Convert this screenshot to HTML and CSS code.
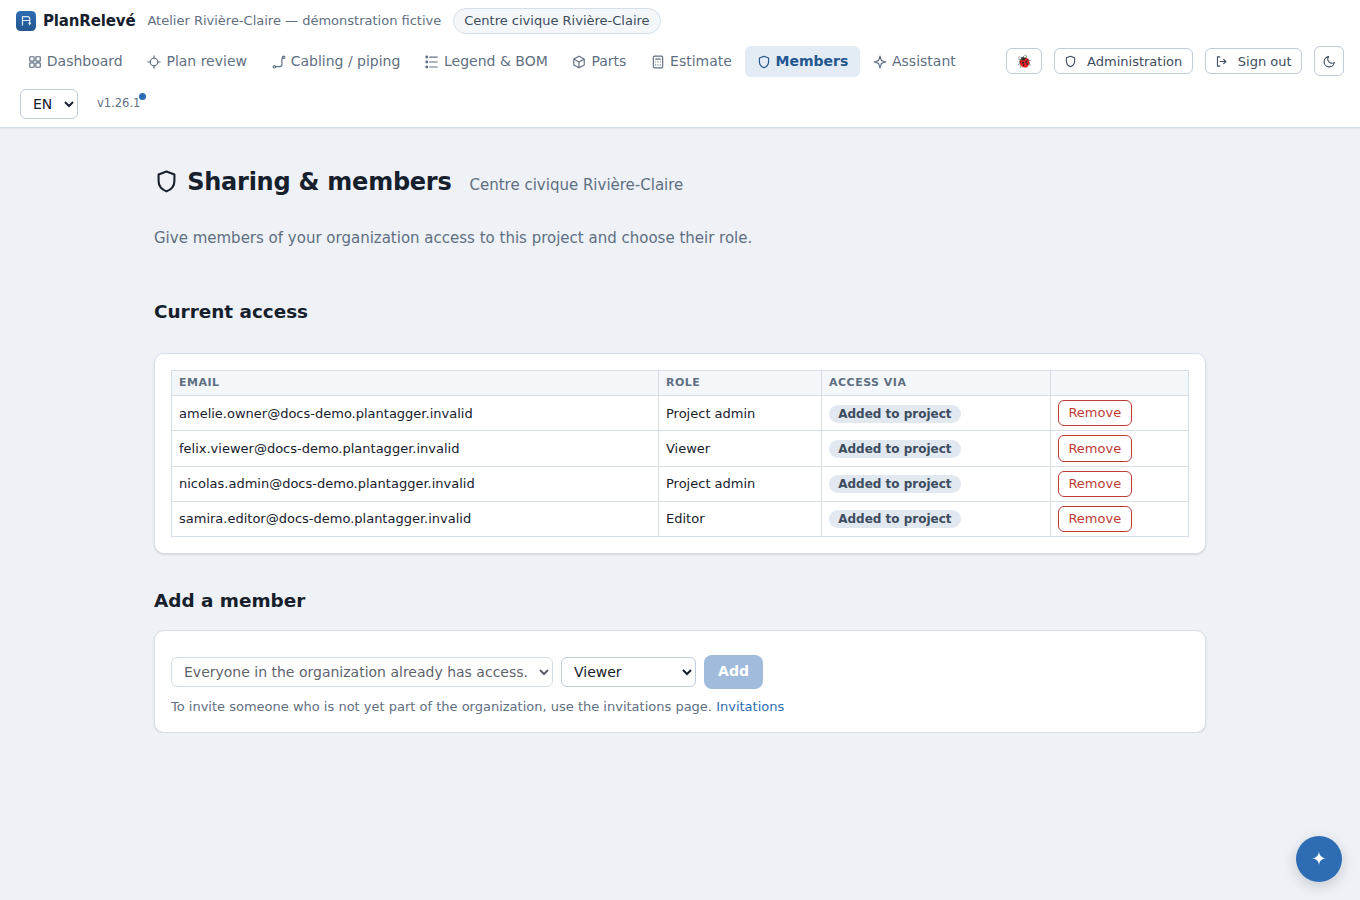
FILE: index.html
```html
<!DOCTYPE html>
<html lang="en">
<head>
  <meta charset="UTF-8">
  <meta name="viewport" content="width=device-width, initial-scale=1.0">
  <title>Sharing &amp; members - PlanRelevé</title>
  <link rel="stylesheet" href="styles.css">
</head>
<body>
  <header class="topbar">
    <div class="topbar-row brand-row">
      <div class="brand">
        <svg class="logo" viewBox="0 0 20 20">
          <defs>
            <linearGradient id="logoFill" x1="0" y1="0" x2="0" y2="1">
              <stop offset="0" stop-color="#2e6db4"/>
              <stop offset="1" stop-color="#23568f"/>
            </linearGradient>
          </defs>
          <rect width="20" height="20" rx="4.5" fill="url(#logoFill)"/>
          <path d="M6.500 14.500V5.600H11.500a2.200 2.200 0 0 1 2.200 2.200V12.500M6.500 9.500H13.700" fill="none" stroke="#dce8f5" stroke-width="1.200"/>
          <path d="M12.200 11.800h3L13.700 14.600z" fill="#fff"/>
        </svg>
        <span>PlanRelevé</span>
      </div>
      <span class="org">Atelier Rivière-Claire — démonstration fictive</span>
      <span class="project-chip">Centre civique Rivière-Claire</span>
    </div>

    <div class="topbar-row">
      <nav class="nav">
        <a href="#"><svg class="icon" viewBox="0 0 24 24"><rect x="3" y="3" width="7.500" height="7.500" rx="1"/><rect x="13.500" y="3" width="7.500" height="7.500" rx="1"/><rect x="3" y="13.500" width="7.500" height="7.500" rx="1"/><rect x="13.500" y="13.500" width="7.500" height="7.500" rx="1"/></svg>Dashboard</a>
        <a href="#"><svg class="icon" viewBox="0 0 24 24"><circle cx="12" cy="12" r="6.500"/><path d="M12 1.500v4M12 18.500v4M1.500 12h4M18.500 12h4"/></svg>Plan review</a>
        <a href="#"><svg class="icon" viewBox="0 0 24 24"><circle cx="4" cy="20" r="2"/><circle cx="20" cy="4" r="2"/><path d="M6 20h7a4 4 0 0 0 4-4V8q0-4 2-4"/></svg>Cabling / piping</a>
        <a href="#"><svg class="icon" viewBox="0 0 24 24"><path d="M8 3.500h13M8 12h13M8 20.500h13"/><g class="solid"><circle cx="3" cy="3.500" r="1.500"/><circle cx="3" cy="12" r="1.500"/><circle cx="3" cy="20.500" r="1.500"/></g></svg>Legend &amp; BOM</a>
        <a href="#"><svg class="icon" viewBox="0 0 24 24"><path d="M12 2l9 4.900v10.200l-9 4.900-9-4.900V6.900zM3 6.900l9 5.100 9-5.100M12 12v10"/></svg>Parts</a>
        <a href="#"><svg class="icon" viewBox="0 0 24 24"><rect x="4" y="2" width="16" height="20" rx="2"/><path d="M8 7h8M8 12h.1M12 12h.1M16 12h.1M8 17h.1M12 17h.1M16 17h.1"/></svg>Estimate</a>
        <a href="#" class="active"><svg class="icon" viewBox="0 0 24 24"><path d="M12 2.200l7.800 2.900v6.400c0 5-3.100 8.500-7.800 10.300-4.700-1.800-7.800-5.300-7.800-10.300V5.100z"/></svg>Members</a>
        <a href="#"><svg class="icon" viewBox="0 0 24 24"><path d="M12 2l2.400 7.600L22 12l-7.600 2.400L12 22l-2.400-7.600L2 12l7.600-2.400z"/></svg>Assistant</a>
      </nav>
      <div class="actions">
        <button type="button" class="btn bug">🐞</button>
        <button type="button" class="btn"><svg class="icon" viewBox="0 0 24 24"><path d="M12 2.500l7.600 2.700v6.300c0 5-3.100 8.200-7.600 10-4.500-1.800-7.600-5-7.600-10V5.200z"/></svg>Administration</button>
        <button type="button" class="btn"><svg class="icon" viewBox="0 0 24 24"><path d="M9 3.500H4.500v17H9M9.500 12H20M16 8l4 4-4 4"/></svg>Sign out</button>
        <button type="button" class="btn theme"><svg class="icon" viewBox="0 0 24 24"><path d="M21 13.500A9.500 9.500 0 1 1 10.500 3a7.500 7.500 0 0 0 10.500 10.500z"/></svg></button>
      </div>
    </div>

    <div class="topbar-row lang-row">
      <select class="lang">
        <option>EN</option>
        <option>FR</option>
      </select>
      <span class="version">v1.26.1<i class="dot"></i></span>
    </div>
  </header>

  <main class="container">
    <div class="page-title">
      <svg class="icon" viewBox="0 0 24 24"><path d="M12 2.500l7.600 2.700v6.300c0 5-3.100 8.200-7.600 10-4.500-1.800-7.600-5-7.600-10V5.200z"/></svg>
      <h1>Sharing &amp; members</h1>
      <span class="subtitle">Centre civique Rivière-Claire</span>
    </div>
    <p class="intro">Give members of your organization access to this project and choose their role.</p>

    <h2>Current access</h2>
    <div class="card">
      <table class="members">
        <colgroup>
          <col class="col-email">
          <col class="col-role">
          <col class="col-via">
          <col>
        </colgroup>
        <thead>
          <tr><th>Email</th><th>Role</th><th>Access via</th><th></th></tr>
        </thead>
        <tbody>
          <tr>
            <td>amelie.owner@docs-demo.plantagger.invalid</td>
            <td>Project admin</td>
            <td><span class="badge">Added to project</span></td>
            <td><button type="button" class="btn danger">Remove</button></td>
          </tr>
          <tr>
            <td>felix.viewer@docs-demo.plantagger.invalid</td>
            <td>Viewer</td>
            <td><span class="badge">Added to project</span></td>
            <td><button type="button" class="btn danger">Remove</button></td>
          </tr>
          <tr>
            <td>nicolas.admin@docs-demo.plantagger.invalid</td>
            <td>Project admin</td>
            <td><span class="badge">Added to project</span></td>
            <td><button type="button" class="btn danger">Remove</button></td>
          </tr>
          <tr>
            <td>samira.editor@docs-demo.plantagger.invalid</td>
            <td>Editor</td>
            <td><span class="badge">Added to project</span></td>
            <td><button type="button" class="btn danger">Remove</button></td>
          </tr>
        </tbody>
      </table>
    </div>

    <h2 class="add-title">Add a member</h2>
    <div class="card add-card">
      <form class="add-form">
        <select class="select-user" disabled>
          <option>Everyone in the organization already has access.</option>
        </select>
        <select class="select-role">
          <option>Viewer</option>
          <option>Editor</option>
          <option>Project admin</option>
        </select>
        <button type="button" class="add-btn" disabled>Add</button>
      </form>
      <p class="hint">To invite someone who is not yet part of the organization, use the invitations page. <a href="#">Invitations</a></p>
    </div>
  </main>

  <button type="button" class="fab">✦</button>
</body>
</html>
```
FILE: styles.css
```css
* {
  box-sizing: border-box;
}
body {
  font-family: "DejaVu Sans", sans-serif;
  font-size: 15px;
  background-color: #eef1f6;
  color: #16202c;
  margin: 0;
}
button,
select {
  font-family: inherit;
}
.icon {
  width: 14px;
  height: 14px;
  flex: none;
  fill: none;
  stroke: currentColor;
  stroke-width: 2;
  stroke-linecap: round;
  stroke-linejoin: round;
}
.icon .solid {
  fill: currentColor;
}

/* Top bar */
.topbar {
  display: flex;
  flex-direction: column;
  gap: 12px;
  height: 128px;
  padding: 8px 16px;
  background-color: #fff;
  border-bottom: 1px solid #d5dde7;
  box-shadow: 0 1px 2px rgba(22, 32, 44, 0.06);
}
.topbar-row {
  display: flex;
  align-items: center;
  height: 31px;
}
.brand-row {
  height: 26px;
  gap: 12px;
}
.brand {
  display: flex;
  align-items: center;
  gap: 7px;
  font-size: 15px;
  font-weight: bold;
  letter-spacing: -0.15px;
}
.logo {
  width: 20px;
  height: 20px;
}
.org {
  padding-bottom: 1px;
  font-size: 13px;
  color: #5f6f82;
}
.project-chip {
  height: 26px;
  line-height: 23px;
  padding: 0 10px;
  border: 1px solid #d5dfe8;
  border-radius: 13px;
  background-color: #f3f7fa;
  font-size: 13px;
  color: #3d4c5e;
}
.nav {
  display: flex;
  gap: 1.7px;
}
.nav a {
  display: flex;
  align-items: center;
  gap: 5px;
  height: 31px;
  padding: 0 11.2px 1px 11.8px;
  border-radius: 6px;
  font-size: 14px;
  color: #5f6f82;
  text-decoration: none;
}
.nav .icon {
  margin-top: 1px;
}
.nav a.active {
  background-color: #e3ebf5;
  color: #22568f;
  font-weight: bold;
}
.actions {
  display: flex;
  align-items: center;
  gap: 12px;
  margin-left: auto;
  padding-bottom: 1px;
}
.btn {
  display: inline-flex;
  align-items: center;
  height: 26px;
  padding: 0 9.4px;
  gap: 9px;
  border: 1px solid #c1ccd9;
  border-radius: 6px;
  background-color: #fff;
  font-size: 13px;
  color: #3d4c5e;
  cursor: pointer;
}
.btn.bug {
  width: 36px;
  justify-content: center;
}
.btn.theme {
  width: 30px;
  height: 30px;
  padding: 0;
  justify-content: center;
}
.btn .icon {
  width: 13px;
  height: 13px;
  margin-right: 0.8px;
}
.btn.theme .icon {
  margin: 1px 0 0 1px;
}
select {
  height: 30px;
  padding: 0 8px;
  border: 1px solid #c1ccd9;
  border-radius: 6px;
  background-color: #fff;
  font-size: 14px;
  color: #16202c;
}
.lang-row {
  height: 30px;
  padding-left: 4px;
}
.lang {
  width: 58px;
}
.version {
  position: relative;
  margin-left: 19px;
  padding-bottom: 2px;
  font-size: 11.5px;
  color: #5f6f82;
}
.dot {
  position: absolute;
  top: -3px;
  right: -6px;
  width: 7px;
  height: 7px;
  border-radius: 50%;
  background-color: #2e6db4;
}

/* Page */
.container {
  width: 1100px;
  margin: 0 auto;
  padding: 38px 24px 0;
}
.page-title {
  display: flex;
  align-items: baseline;
}
.page-title .icon {
  width: 25px;
  height: 25px;
  align-self: center;
  margin: 0 8.2px 2px 0;
}
h1 {
  margin: 0 18px 0 0;
  font-size: 24px;
  line-height: 32px;
  letter-spacing: -0.24px;
}
.subtitle {
  color: #5f6f82;
}
.intro {
  margin: 30px 0 0;
  line-height: 20px;
  color: #5f6f82;
}
h2 {
  margin: 53px 0 30px;
  font-size: 18.4px;
  line-height: 22px;
}
.add-title {
  margin: 36px 0 18px;
}
.card {
  padding: 16px;
  border: 1px solid #d5dfe8;
  border-radius: 10px;
  background-color: #fff;
  box-shadow: 0 1px 2px rgba(22, 32, 44, 0.12);
}
.members {
  width: 1018px;
  table-layout: fixed;
  border-collapse: collapse;
  font-size: 13px;
}
.col-email {
  width: 487px;
}
.col-role {
  width: 163px;
}
.col-via {
  width: 229px;
}
.members th,
.members td {
  height: 35.2px;
  padding: 0 7px;
  border: 1px solid #d5dde7;
  text-align: left;
}
.members th {
  height: 25.2px;
  padding-bottom: 2px;
  background-color: #f3f7fa;
  font-size: 11px;
  letter-spacing: 0.5px;
  text-transform: uppercase;
  color: #5f6f82;
}
.badge {
  display: inline-block;
  height: 18px;
  padding: 0 9.2px;
  border-radius: 9px;
  background-color: #e1e8f0;
  font-size: 12px;
  font-weight: bold;
  line-height: 18px;
  color: #3d4c5e;
  vertical-align: -1.8px;
}
.btn.danger {
  height: 26.2px;
  padding-bottom: 0.8px;
  border-color: #bf3b37;
  color: #bf3b37;
  vertical-align: middle;
}
.add-card {
  height: 103.4px;
  padding-top: 24px;
}
.add-form {
  display: flex;
  align-items: center;
  gap: 8px;
}
.select-user {
  width: 382px;
}
.select-user:disabled {
  opacity: 0.7;
}
.select-role {
  width: 135px;
}
.add-btn {
  width: 59px;
  height: 34px;
  padding: 0 0 2px;
  border: none;
  border-radius: 8px;
  background-color: #a0bbdc;
  font-size: 14px;
  font-weight: bold;
  color: #fff;
}
.hint {
  margin: 9px 0 0;
  font-size: 13px;
  line-height: 18px;
  color: #5f6f82;
}
.hint a {
  color: #2e6db4;
  text-decoration: none;
}

/* Assistant launcher */
.fab {
  position: fixed;
  right: 18px;
  bottom: 18px;
  width: 46px;
  height: 46px;
  padding: 0 0 2px;
  border: none;
  border-radius: 50%;
  background-color: #2e6db4;
  box-shadow: 0 4px 14px rgba(22, 32, 44, 0.18);
  font-size: 18.4px;
  color: #fff;
  cursor: pointer;
}
```
